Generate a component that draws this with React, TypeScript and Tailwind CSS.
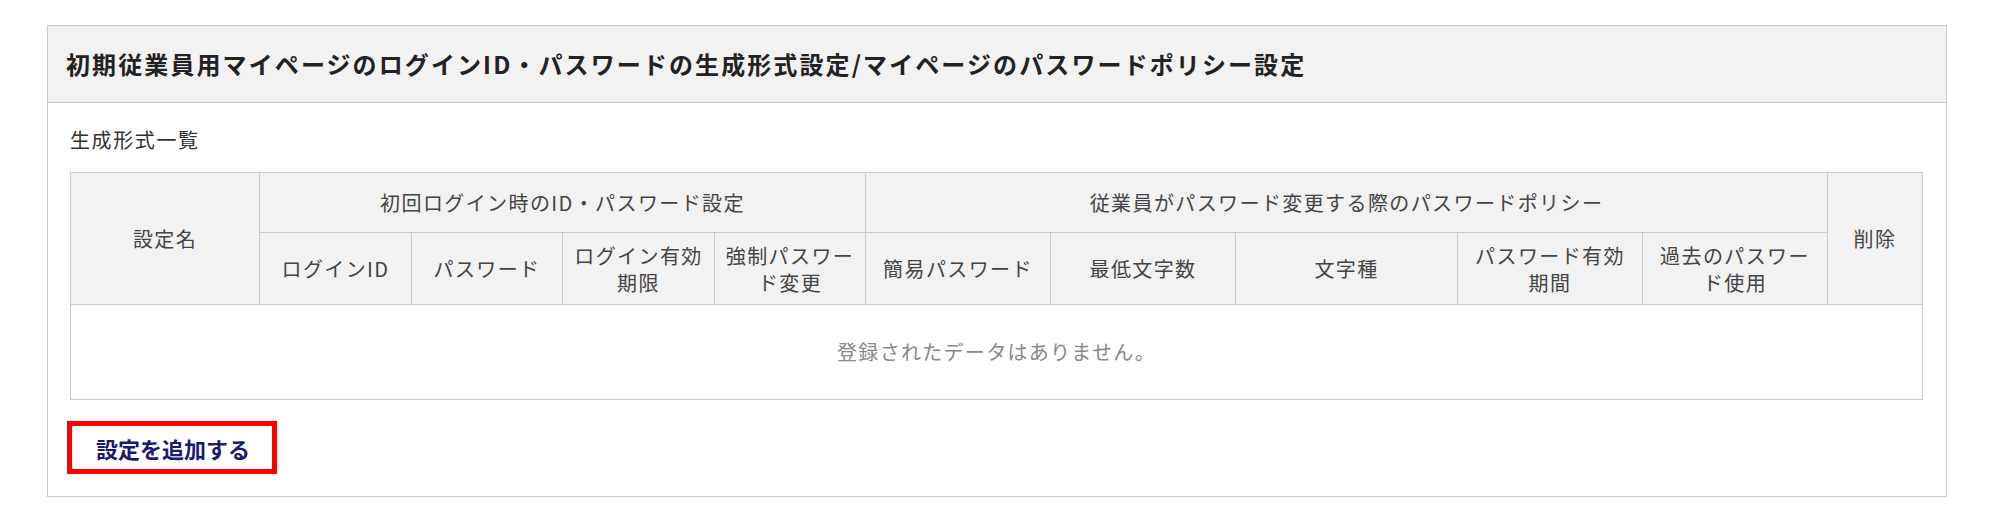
import React from "react";

const cols = [189, 152, 151, 152, 151, 185, 185, 222, 185, 185, 95];

const th = "border border-[#cccccc] bg-[#f2f2f2] font-normal text-[#444444] text-[20px] tracking-[1.4px] leading-[27px] text-center align-middle px-[10px]";

const App = () => {
	return (
		<div className="bg-white min-h-screen pt-[25px] pl-[47px] font-['Noto_Sans_CJK_JP',sans-serif]">
			<div className="w-[1900px] border border-[#cccccc]">
				<div className="h-[77px] bg-[#f2f2f2] border-b border-[#cccccc] flex items-center px-[18px]">
					<h1 className="text-[24px] font-bold text-[#222222] leading-none tracking-[2.1px]">
						初期従業員用マイページのログインID・パスワードの生成形式設定/マイページのパスワードポリシー設定
					</h1>
				</div>
				<div className="pl-[22px] pr-[23px] pt-[23px] pb-[22px]">
					<p className="text-[20px] text-[#333333] leading-[28px] tracking-[1.6px] pb-[18px]">生成形式一覧</p>
					<table className="table-fixed border-collapse w-[1852px]">
						<colgroup>
							{cols.map((w, i) => (
								<col key={i} style={{ width: w }} />
							))}
						</colgroup>
						<thead>
							<tr className="h-[60px]">
								<th rowSpan={2} className={th}>設定名</th>
								<th colSpan={4} className={th}>初回ログイン時のID・パスワード設定</th>
								<th colSpan={5} className={th}>従業員がパスワード変更する際のパスワードポリシー</th>
								<th rowSpan={2} className={th}>削除</th>
							</tr>
							<tr className="h-[72px]">
								<th className={th}>ログインID</th>
								<th className={th}>パスワード</th>
								<th className={th}>ログイン有効期限</th>
								<th className={th}>強制パスワード変更</th>
								<th className={th}>簡易パスワード</th>
								<th className={th}>最低文字数</th>
								<th className={th}>文字種</th>
								<th className={th}>パスワード有効期間</th>
								<th className={th}>過去のパスワード使用</th>
							</tr>
						</thead>
						<tbody>
							<tr className="h-[95px]">
								<td colSpan={11} className="border border-[#cccccc] text-center align-middle text-[20px] tracking-[1.3px] text-[#888888]">
									登録されたデータはありません。
								</td>
							</tr>
						</tbody>
					</table>
					<div className="pt-[21px] -ml-[3px]">
						<button className="w-[210px] h-[53px] border-[5px] border-[#ff0000] bg-white text-[22px] font-bold text-[#1a1a70] leading-none text-left pl-[24px]">
							設定を追加する
						</button>
					</div>
				</div>
			</div>
		</div>
	);
};

export default App;
